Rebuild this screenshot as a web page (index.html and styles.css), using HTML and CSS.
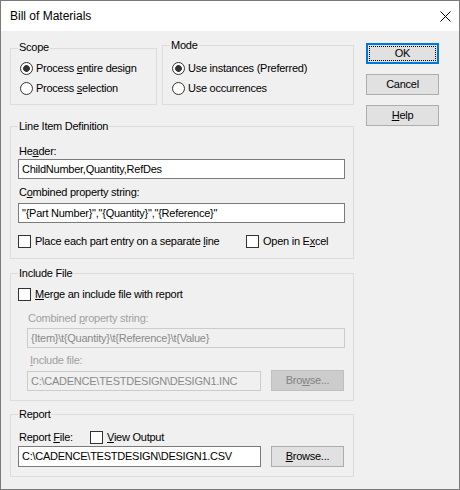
FILE: index.html
```html
<!DOCTYPE html>
<html>
<head>
<meta charset="utf-8">
<link rel="stylesheet" href="styles.css">
</head>
<body>
<div class="window">
  <div class="titlebar">
    <span class="title">Bill of Materials</span>
    <svg class="close" width="11" height="11" viewBox="0 0 11 11"><path d="M0.5 0.5 L10.5 10.5 M10.5 0.5 L0.5 10.5" stroke="#000" stroke-width="1" fill="none"/></svg>
  </div>
  <div class="client">
    <div class="main">
      <div class="toprow">
        <fieldset class="group scope">
          <legend>Scope</legend>
          <div class="opt"><span class="radio on"></span><span>Process <u>e</u>ntire design</span></div>
          <div class="opt"><span class="radio"></span><span>Process <u>s</u>election</span></div>
        </fieldset>
        <fieldset class="group mode">
          <legend>Mode</legend>
          <div class="opt"><span class="radio on"></span><span>Use instances (Preferred)</span></div>
          <div class="opt"><span class="radio"></span><span>Use occurrences</span></div>
        </fieldset>
      </div>

      <fieldset class="group lineitem">
        <legend>Line Item Definition</legend>
        <div class="label">He<u>a</u>der:</div>
        <div class="edit e1">ChildNumber,Quantity,RefDes</div>
        <div class="label l2">C<u>o</u>mbined property string:</div>
        <div class="edit e2">"{Part Number}","{Quantity}","{Reference}"</div>
        <div class="checks">
          <div class="check first"><span class="box"></span><span>Place each part entry on a separate <u>l</u>ine</span></div>
          <div class="check"><span class="box"></span><span>Open in E<u>x</u>cel</span></div>
        </div>
      </fieldset>

      <fieldset class="group include">
        <legend>Include File</legend>
        <div class="check"><span class="box"></span><span><u>M</u>erge an include file with report</span></div>
        <div class="label dis dl1">Combined <u>p</u>roperty string:</div>
        <div class="edit disabled de1">{Item}\t{Quantity}\t{Reference}\t{Value}</div>
        <div class="label dis dl2"><u>I</u>nclude file:</div>
        <div class="filerow inc">
          <div class="edit disabled de2">C:\CADENCE\TESTDESIGN\DESIGN1.INC</div>
          <div class="btn disabled"><span>Bro<u>w</u>se...</span></div>
        </div>
      </fieldset>

      <fieldset class="group report">
        <legend>Report</legend>
        <div class="reportrow">
          <div class="label rlabel">Report <u>F</u>ile:</div>
          <div class="check"><span class="box"></span><span><u>V</u>iew Output</span></div>
        </div>
        <div class="filerow rep">
          <div class="edit re">C:\CADENCE\TESTDESIGN\DESIGN1.CSV</div>
          <div class="btn"><span><u>B</u>rowse...</span></div>
        </div>
      </fieldset>
    </div>

    <div class="buttons">
      <div class="btn default"><span>OK</span></div>
      <div class="btn"><span>Cancel</span></div>
      <div class="btn"><span><u>H</u>elp</span></div>
    </div>
  </div>
</div>
</body>
</html>
```

FILE: styles.css
```css
* { box-sizing: border-box; }

body {
  margin: 0;
  font-family: "Liberation Sans", Arial, sans-serif;
  font-size: 11px;
  letter-spacing: -0.25px;
  color: #000;
}

.window {
  width: 460px;
  height: 490px;
  border: 1px solid #7a7a7a;
  background: #f0f0f0;
  display: flex;
  flex-direction: column;
}

.titlebar {
  height: 30px;
  flex: none;
  background: #fff;
  display: flex;
  align-items: center;
  justify-content: space-between;
  padding: 0 8px 0 9px;
}

.title {
  font-size: 12px;
  letter-spacing: 0;
  line-height: 14px;
}

.close { display: block; }

.client {
  display: flex;
  gap: 12px;
  padding: 8px 0 0 9px;
}

.main {
  width: 344px;
  flex: none;
  display: flex;
  flex-direction: column;
}

.toprow {
  display: flex;
  align-items: flex-end;
  gap: 5px;
}

.group {
  border: 1px solid #dcdcdc;
  margin: 0;
  padding: 0 8px 0 7px;
  min-width: 0;
}

.group legend {
  padding: 0 1px;
  line-height: 13px;
}

.scope {
  width: 147px;
  padding: 2px 8px 6px 9px;
}
.scope legend { padding-bottom: 2px; margin-left: -2px; }

.mode {
  width: 192px;
  padding: 6px 8px 6px 9px;
}
.mode legend { margin-left: -2px; }

.opt {
  display: flex;
  align-items: center;
  height: 20px;
  white-space: nowrap;
}

.radio {
  width: 13px;
  height: 13px;
  border: 1px solid #333;
  border-radius: 50%;
  background: #fff;
  margin-right: 3px;
  flex: none;
}
.radio.on {
  background: radial-gradient(circle, #333 0, #333 3px, #fff 3.7px);
}

.label {
  line-height: 13px;
  margin-left: 1px;
  white-space: nowrap;
}
.label.dis { color: #a0a0a0; }

.edit {
  height: 20px;
  border: 1px solid #7a7a7a;
  background: #fff;
  padding: 0 3px;
  line-height: 18px;
  white-space: nowrap;
  overflow: hidden;
}
.edit.disabled {
  border-color: #cccccc;
  background: #f0f0f0;
  color: #8a8a8a;
}

.check {
  display: flex;
  align-items: center;
  height: 13px;
  line-height: 13px;
  white-space: nowrap;
}

.box {
  width: 13px;
  height: 13px;
  border: 1px solid #333;
  background: #fff;
  margin-right: 4px;
  flex: none;
}

.btn {
  width: 73px;
  height: 21px;
  flex: none;
  border: 1px solid #adadad;
  background: #e1e1e1;
  display: flex;
  align-items: center;
  justify-content: center;
  line-height: 13px;
  white-space: nowrap;
}
.btn.default {
  position: relative;
  border-color: #0078d7;
  box-shadow: inset 0 0 0 1px #0078d7;
}
.btn.default::after {
  content: "";
  position: absolute;
  top: 2px; left: 2px; right: 2px; bottom: 2px;
  border: 1px dotted #000;
}
.btn.disabled {
  background: #cccccc;
  border-color: #bfbfbf;
  color: #838383;
}

/* Line item definition */
.lineitem {
  margin-top: 15px;
  padding-top: 12px;
  padding-bottom: 10px;
}
.e1 { margin-top: 1px; }
.l2 { margin-top: 7px; }
.e2 { margin-top: 4px; }
.checks {
  display: flex;
  margin-top: 12px;
}
.check.first { width: 228px; flex: none; }

/* Include file */
.include {
  margin-top: 8px;
  padding-top: 8px;
  padding-bottom: 9px;
}
.dl1 { margin-top: 11px; margin-left: 10px; }
.de1 { margin-top: 3px; margin-left: 9px; }
.dl2 { margin-top: 6px; margin-left: 12px; }

.filerow {
  display: flex;
  align-items: flex-start;
  gap: 10px;
}
.filerow.inc { margin-top: 3px; margin-left: 9px; }
.de2 { width: 234px; margin-top: 1px; }

/* Report */
.report {
  margin-top: 7px;
  padding-top: 10px;
  padding-bottom: 9px;
}
.reportrow {
  display: flex;
  align-items: center;
}
.rlabel { width: 71px; flex: none; }
.filerow.rep { margin-top: 2px; }
.re { width: 243px; height: 21px; line-height: 19px; }

.buttons {
  width: 73px;
  flex: none;
  display: flex;
  flex-direction: column;
  gap: 10px;
  padding-top: 4px;
}
```
